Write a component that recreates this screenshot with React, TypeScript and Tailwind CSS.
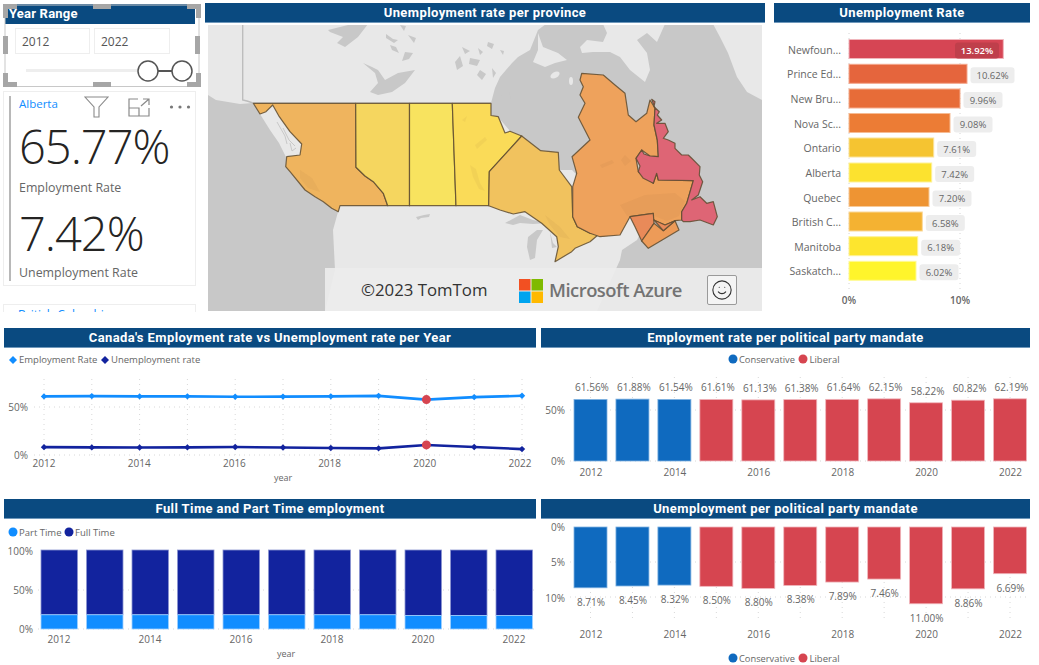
import React from 'react';
import { Smile } from 'lucide-react';

const YEARS = [2012, 2013, 2014, 2015, 2016, 2017, 2018, 2019, 2020, 2021, 2022];
const EMP = [61.56, 61.88, 61.54, 61.61, 61.13, 61.38, 61.64, 62.15, 58.22, 60.82, 62.19];
const UNEMP = [8.71, 8.45, 8.32, 8.5, 8.8, 8.38, 7.89, 7.46, 11.0, 8.86, 6.69];
const PART = [18, 18, 18, 18, 18, 18, 18, 18, 17, 17, 17];

const PROVINCES = [
    { name: 'Newfoun...', value: '13.92%', top: 39.5, w: 154.3, color: '#d64554', border: '#f0b6bc' },
    { name: 'Prince Ed...', value: '10.62%', top: 64.3, w: 118, color: '#e5653d', border: '#f3a78d' },
    { name: 'New Bru...', value: '9.96%', top: 89, w: 111, color: '#e76c38', border: '#f4ab8c' },
    { name: 'Nova Sc...', value: '9.08%', top: 113.5, w: 101, color: '#ec7c35', border: '#f6bb93' },
    { name: 'Ontario', value: '7.61%', top: 138, w: 84.7, color: '#f5c431', border: '#fae298' },
    { name: 'Alberta', value: '7.42%', top: 163, w: 82.7, color: '#fce22f', border: '#fef197' },
    { name: 'Quebec', value: '7.20%', top: 187.5, w: 80, color: '#ee9433', border: '#f7ca99' },
    { name: 'British C...', value: '6.58%', top: 212, w: 73.3, color: '#f4b232', border: '#fad898' },
    { name: 'Manitoba', value: '6.18%', top: 236.7, w: 68.7, color: '#fde52e', border: '#fef297' },
    { name: 'Saskatch...', value: '6.02%', top: 261.3, w: 67, color: '#fff52b', border: '#fffa95' },
];

const BLUE = '#0f6abf';
const RED = '#d64550';

// Newfoundland coast, traced at 3x from x=500 y=60
const NL_COAST = [
    [455, 118], [465, 125], [462, 140], [478, 155], [472, 165], [485, 180], [470, 190], [495, 190], [505, 215],
    [490, 235], [505, 240], [525, 250], [525, 265], [545, 285], [565, 285], [575, 295], [600, 320], [598, 345],
    [608, 365], [595, 405], [575, 420], [600, 410], [620, 430], [640, 425], [652, 470], [640, 495], [600, 480],
    [570, 485], [550, 485], [545, 480], [545, 455], [560, 430], [580, 362], [475, 360], [470, 340], [460, 370],
    [430, 355], [415, 335], [420, 318], [408, 295], [425, 270], [432, 282], [450, 288], [475, 290], [472, 240],
    [462, 195], [465, 145],
];
const NL_PATH = 'M' + NL_COAST.map(([x, y]) => `${(500 + x / 3).toFixed(1)} ${(60 + y / 3).toFixed(1)}`).join('L') + 'Z';

function Title({ children }: { children: React.ReactNode }) {
    return (
        <div className="h-[20px] bg-[#0a4a80] border-b border-[#6f98bb] text-white text-[13px] leading-[19px] font-bold text-center tracking-[0.4px] font-['Roboto',sans-serif]">
            {children}
        </div>
    );
}

function YearRange() {
    return (
        <div className="relative h-[83px] ml-[5px] w-[195px]">
            <div className="h-[20px] w-[190px] mt-[1px] bg-[#0a4a80] text-white text-[13px] leading-[19px] font-bold pl-[4px] tracking-[0.2px] font-['Roboto',sans-serif]">
                Year Range
            </div>
            <div className="flex gap-[4px] ml-[10px] mt-[4px]">
                <div className="w-[75px] h-[26px] border border-[#eeeeee] text-[12px] leading-[25px] text-[#555555] pl-[6px]">2012</div>
                <div className="w-[76px] h-[26px] border border-[#eeeeee] text-[12px] leading-[25px] text-[#555555] pl-[6px]">2022</div>
            </div>
            {/* slider + selection frame */}
            <svg className="absolute left-[-5px] top-[-3px]" width="205" height="90" viewBox="0 0 205 90">
                <rect x="26" y="68" width="112" height="3" fill="#eeeeee" />
                <line x1="158" y1="70" x2="172" y2="70" stroke="#555555" strokeWidth="2" />
                <circle cx="148" cy="70" r="10" fill="white" stroke="#555555" strokeWidth="1.5" />
                <circle cx="182" cy="70" r="10" fill="white" stroke="#555555" strokeWidth="1.5" />
                <rect x="5" y="4" width="194" height="81.5" fill="none" stroke="#c8c8c8" />
                <g fill="#a6a6a6">
                    <path d="M3 3h14v5H8v9H3z" />
                    <path d="M201 3h-14v5h9v9h5z" />
                    <path d="M3 86H17v-5H8v-9H3z" />
                    <path d="M201 86h-14v-5h9v-9h5z" />
                    <rect x="93" y="3" width="18" height="5" />
                    <rect x="93" y="81" width="18" height="5" />
                    <rect x="3" y="35" width="5" height="18" />
                    <rect x="195" y="35" width="5" height="18" />
                </g>
            </svg>
        </div>
    );
}

function KpiCard() {
    return (
        <div className="relative ml-[3px] mt-[4px] w-[193px] h-[195px] border border-[#eeeeee] py-[4px] pl-[5px]">
            <div className="h-full border-l-2 border-[#b8b8b8] pl-[8px]">
                <div className="text-[11.5px] leading-[16px] text-[#118dff]">Alberta</div>
                <div className="mt-[4px] text-[47px] leading-[60px] font-light text-[#252423] tracking-[-1px]">65.77%</div>
                <div className="mt-[4px] text-[12.4px] leading-[16px] text-[#666666]">Employment Rate</div>
                <div className="mt-[7px] text-[47px] leading-[60px] font-light text-[#252423] tracking-[-1px]">7.42%</div>
                <div className="mt-[2px] text-[12.4px] leading-[16px] text-[#666666]">Unemployment Rate</div>
            </div>
            {/* visual header on hover */}
            <div className="absolute right-[4px] top-[4px] flex items-center gap-[19px] text-[#8a8a8a]">
                <svg width="25" height="22" viewBox="0 0 25 22" fill="none" stroke="currentColor" strokeWidth="1.1">
                    <path d="M1 1H24L15 11V21H10V11Z" />
                </svg>
                <svg width="22" height="19" viewBox="0 0 22 19" fill="none" stroke="currentColor" strokeWidth="1.2">
                    <path d="M10 1H1v17h20v-8" />
                    <path d="M1 10h10v8" />
                    <path d="M13 8l8-7M15 1h6v6" />
                </svg>
                <svg width="22" height="6" viewBox="0 0 22 6" fill="#777777">
                    <circle cx="2.5" cy="3" r="1.6" />
                    <circle cx="11" cy="3" r="1.6" />
                    <circle cx="19.5" cy="3" r="1.6" />
                </svg>
            </div>
        </div>
    );
}

function CanadaMap() {
    return (
        <div className="relative ml-[3px] mt-[2px] w-[554px] h-[286px] overflow-hidden bg-[#e8e8e8]">
            <svg width="554" height="286" viewBox="208 25 554 286" className="block">
                {/* water */}
                <g fill="#c8c8c8">
                    <path d="M208 95L216 100L240 104L253 103L260 114L270 130L279 143L286 157L286 167L290 172L305 190L315 197L323 202L332 208L338 212L333 230L335 270L325 311H208Z" />
                    <path d="M491 103L491 103L495 88L500 77L512 63L518 57L530 50L538 30L546 24H713L720 37L728 53L737 77L747 92L762 100V311H597L620 260L622 250L637 240L650 215L600 200L572 170L559 170L558 152L540 150L522 136L510 131L498 117L491 115Z" />
                    <path d="M328 30L352 24H368L358 37L345 47L337 43L343 37L330 32Z" />
                    <path d="M363 63L372 67L378 70L385 80L398 73L415 70L405 83L392 92L378 95L370 92L378 83L375 73Z" />
                    <path d="M390 45l6 2 3 6-7-3zM386 34l7 5 5 1-4 3-8-5zM405 52l8 1-4 6-7 2zM455 62l5-6 3 10-6 4zM462 47l8 4-5 3zM470 58l10 2-3 6-8-2zM480 70l6 4-4 6-5-5zM488 42l6 2-2 5-5-3zM408 35l6 8 2-5zM400 25l4 6 2-5z" />
                    <path d="M505 105l-5-12 3-4 6 3 2 7zM492 68l4 5-3 5zM478 48l5 4-3 3zM500 50l4 1-1 4z" />
                    {/* great lakes */}
                    <path d="M505 223L520 215L533 220L547 223L533 224L520 223L513 225Z" />
                    <path d="M528 237L537 230L543 230L537 240L535 258L530 260L527 247Z" />
                    <path d="M550 232L553 243L557 247L552 248Z" />
                    <path d="M416 217l8-2 6-1-1 3-8 1-3 2z" />
                </g>
                {/* islands on the bay */}
                <g fill="#e8e8e8">
                    <path d="M538 33L543 47L558 53L567 60L555 63L545 67L533 62L538 50Z" />
                    <path d="M603 24H665L657 42L647 33L637 40L647 53L650 70L645 82L630 70L620 57L610 52L593 52L582 53L580 47L587 40L603 42L607 33Z" />
                    <ellipse cx="555" cy="75" rx="5" ry="3" transform="rotate(-30 555 75)" />
                    <ellipse cx="571" cy="81" rx="2" ry="4" />
                </g>
                <path d="M242.7 24V100L247 101L253 103H491" fill="none" stroke="#bdbdbd" strokeWidth="1.4" />
                {/* fjords along the panhandle */}
                <path d="M277 122l8 14 2 8M283 128l6 12 6 6M290 143l2 8 4-3" fill="none" stroke="#c4c4c4" strokeWidth="0.9" />

                {/* provinces */}
                <g stroke="#5f4c30" strokeOpacity="0.85" strokeWidth="1.2" strokeLinejoin="round">
                    <path fill="#efb45e" d="M253.3 103.3L260 114L266 111.7L272.7 105L279.3 116.7L290 131.7L301.7 144L300 155L286.7 156.7L285.7 166.7L290 171.7L305 190L315 196.7L323.3 201.7L331.7 208.3L338.3 211.7L340 205.7H387.7L383.3 193.3L373.3 181.7L365 176L356 167.3L355.7 103.3Z" />
                    <path fill="#f5d65f" d="M355.7 103.3L356 167.3L365 176L373.3 181.7L383.3 193.3L387.7 205.7H409.5V103.3Z" />
                    <path fill="#f8e35f" d="M409.5 103.3V205.7H456L452.3 103.3Z" />
                    <path fill="#fadb58" d="M452.3 103.3L456 205.7H488.7L489.3 171.7L521.7 136L510 131.3L505 133L498.3 116.7L491 115.5V103.3Z" />
                    <path fill="#f1c25e" d="M521.7 136L540.7 150.7L558.3 152.3L559.3 170L571.7 186.7L572.7 216.7L577.3 226.7L590 233.3L600 233.3L590 241.7L575 248.3L571.7 251.7L555 261.7L558.3 246.7L556.7 236.7L541.7 223.3L525 211.7L513.3 214L500 210L488.7 205.7L489.3 171.7Z" />
                    <path fill="#eea25c" d="M581.7 73.3L603.3 75L615 85L625 93.3L628.3 115L636 121.7L646.7 113.3L650 100L655 108.3L654 125L657.3 140L658.3 156.7L650 156L641.7 150L636 158.3L638.3 171.7L653.3 183.3L656.7 173.3L658.3 180L693.3 180.7L686.7 203.3L681.7 211.7L681.7 220L675 220.7L665 225L653.3 220L653.3 213.3L630 216.7L620 235L600 236.7L590 233.3L577.3 226.7L572.7 216.7V186.7L576.7 173.3L572 156.7L590 140L578.3 117.3L585 103.3L580 95L583.3 86.7L580 80Z" />
                    <path fill="#de6575" d={NL_PATH} />
                    <path fill="#e98a59" d="M630 216.7L653.3 213.3L654 223.3L641.7 241L635 226.7Z" />
                    <path fill="#ed9b58" d="M641.7 241L654 223.3L663.3 230.7L675 220.7L679 230L648.3 248.3Z" />
                    <path fill="#e98a59" d="M654 220L665 225L675 220.7L663.3 230.7Z" />
                </g>
                {/* lakes showing through */}
                <g fill="#8a6a3a" fillOpacity="0.07">
                    <path d="M470 165l6 4 4 14 5 8-6-2-6-12zM475 145l10-8 2 3-10 9zM462 120l5-4-2 6z" />
                    <path d="M620 205l25-10 30-2 10 8-6 15-12 5-20-8-20 3z" />
                    <path d="M300 170l12 8 8 14-12-4-8-10z" />
                    <path d="M600 165l12-5 2 3-12 5zM625 155l6 6-6 5-4-6z" />
                    <path d="M545 215l15 12 10 12-10-2-10-12z" />
                </g>
            </svg>
            {/* attribution */}
            <div className="absolute left-[117px] bottom-0 w-[437px] h-[43px] bg-[#ececec]/90 flex items-center">
                <span className="ml-[36px] w-[158px] text-[16.8px] text-[#333333]">©2023 TomTom</span>
                <svg width="24" height="24" viewBox="0 0 24 24" className="mt-[2px]">
                    <rect width="11.5" height="11.5" fill="#f25022" />
                    <rect x="12.5" width="11.5" height="11.5" fill="#7fba00" />
                    <rect y="12.5" width="11.5" height="11.5" fill="#00a4ef" />
                    <rect x="12.5" y="12.5" width="11.5" height="11.5" fill="#ffb900" />
                </svg>
                <span className="ml-[6px] w-[134px] whitespace-nowrap text-[18.4px] font-semibold tracking-[-0.5px] text-[#737373]">Microsoft Azure</span>
                <div className="ml-[24px] w-[30px] h-[30px] border border-[#9a9a9a] rounded-[2px] bg-[#f4f4f4] flex items-center justify-center text-[#333333]">
                    <Smile size={22} strokeWidth={1.2} />
                </div>
            </div>
        </div>
    );
}

function ProvinceBars() {
    return (
        <svg width="256" height="300" viewBox="774 23 256 300" className="block">
            {[849, 960].map((x) => (
                <line key={x} x1={x} y1="33" x2={x} y2="290" stroke="#d4d4d4" strokeDasharray="1 4" />
            ))}
            {PROVINCES.map((p, i) => {
                const inside = i === 0;
                const pillW = p.value.length === 6 ? 44 : 39;
                const pillX = inside ? 955 : 849 + p.w + 3.5;
                return (
                    <g key={p.name}>
                        <text x="841" y={p.top + 14} textAnchor="end" fontSize="10.5" fill="#666666">{p.name}</text>
                        <rect x="849" y={p.top} width={p.w} height="19" fill={p.color} stroke={p.border} strokeWidth="1" />
                        <rect x={pillX} y={p.top + 3} width={pillW} height="16" rx="3" fill={inside ? '#bf3f4b' : '#ededed'} />
                        <text x={pillX + pillW / 2} y={p.top + 14.5} textAnchor="middle" fontSize="9.5" fontWeight={inside ? 600 : 400} fill={inside ? '#ffffff' : '#666666'}>{p.value}</text>
                    </g>
                );
            })}
            <text x="849" y="304" textAnchor="middle" fontSize="10" fontWeight="600" fill="#666666">0%</text>
            <text x="960" y="304" textAnchor="middle" fontSize="10" fontWeight="600" fill="#666666">10%</text>
        </svg>
    );
}

function diamond(cx: number, cy: number, r: number) {
    return `${cx},${cy - r} ${cx + r},${cy} ${cx},${cy + r} ${cx - r},${cy}`;
}

function LineChart() {
    const xs = YEARS.map((_, i) => 44 + i * 47.8);
    const yOf = (v: number) => 456.5 - v * 0.96;
    const series = [
        { data: EMP, color: '#118dff' },
        { data: UNEMP, color: '#12239e' },
    ];
    return (
        <svg width="532" height="150" viewBox="4 349 532 150" className="block">
            <polygon points={diamond(13, 361, 4)} fill="#118dff" />
            <text x="19" y="364" fontSize="9.5" fill="#666666">Employment Rate</text>
            <polygon points={diamond(105, 361, 4)} fill="#12239e" />
            <text x="111" y="364" fontSize="9.5" fill="#666666">Unemployment rate</text>
            {xs.map((x) => (
                <line key={x} x1={x} y1="380" x2={x} y2="458" stroke="#d8d8d8" strokeDasharray="1 4" />
            ))}
            {[408, 456].map((y) => (
                <line key={y} x1="34" y1={y} x2="526" y2={y} stroke="#d8d8d8" strokeDasharray="1 4" />
            ))}
            <text x="28" y="412" textAnchor="end" fontSize="10" fill="#666666">50%</text>
            <text x="28" y="460" textAnchor="end" fontSize="10" fill="#666666">0%</text>
            {series.map((s) => (
                <g key={s.color}>
                    <polyline points={s.data.map((v, i) => `${xs[i]},${yOf(v)}`).join(' ')} fill="none" stroke={s.color} strokeWidth="2.6" />
                    {s.data.map((v, i) =>
                        i === 8 ? (
                            <circle key={i} cx={xs[i]} cy={yOf(v)} r="4.5" fill={RED} />
                        ) : (
                            <polygon key={i} points={diamond(xs[i], yOf(v), 3.2)} fill={s.color} />
                        )
                    )}
                </g>
            ))}
            {YEARS.filter((y) => y % 2 === 0).map((y, i) => (
                <text key={y} x={44 + i * 95.2} y="468" textAnchor="middle" fontSize="10" fill="#666666">{y}</text>
            ))}
            <text x="283" y="482" textAnchor="middle" fontSize="9" fill="#666666">year</text>
        </svg>
    );
}

function StackedChart() {
    const top = 550;
    const bottom = 629;
    return (
        <svg width="532" height="146" viewBox="4 519 532 146" className="block">
            <circle cx="13" cy="532" r="4.5" fill="#118dff" />
            <text x="19" y="535.5" fontSize="9.5" fill="#666666">Part Time</text>
            <circle cx="69" cy="532" r="4.5" fill="#12239e" />
            <text x="75" y="535.5" fontSize="9.5" fill="#666666">Full Time</text>
            <text x="33" y="555" textAnchor="end" fontSize="10" fill="#666666">100%</text>
            <text x="33" y="594" textAnchor="end" fontSize="10" fill="#666666">50%</text>
            <text x="33" y="633" textAnchor="end" fontSize="10" fill="#666666">0%</text>
            {[590, 629].map((y) => (
                <line key={y} x1="38" y1={y} x2="536" y2={y} stroke="#d8d8d8" strokeDasharray="1 4" />
            ))}
            {YEARS.map((y, i) => {
                const x = 41 + i * 45.5;
                const split = bottom - ((bottom - top) * PART[i]) / 100;
                return (
                    <g key={y}>
                        <rect x={x} y={top} width="36.5" height={split - top} fill="#12239e" stroke="#8a94d0" strokeWidth="0.8" />
                        <rect x={x} y={split} width="36.5" height={bottom - split} fill="#118dff" stroke="#a0d0ff" strokeWidth="0.8" />
                        {y % 2 === 0 && (
                            <text x={x + 18} y="643" textAnchor="middle" fontSize="10" fill="#666666">{y}</text>
                        )}
                    </g>
                );
            })}
            <text x="286" y="657" textAnchor="middle" fontSize="9" fill="#666666">year</text>
        </svg>
    );
}

function PartyLegend({ y }: { y: number }) {
    return (
        <g>
            <circle cx="733" cy={y} r="4.5" fill={BLUE} />
            <text x="739" y={y + 3.5} fontSize="9.3" fill="#666666">Conservative</text>
            <circle cx="803" cy={y} r="4.5" fill={RED} />
            <text x="809.5" y={y + 3.5} fontSize="9.5" fill="#666666">Liberal</text>
        </g>
    );
}

function EmploymentParty() {
    return (
        <svg width="489" height="150" viewBox="541 349 489 150" className="block">
            <PartyLegend y={360} />
            {YEARS.map((y, i) => (
                <line key={y} x1={590.5 + i * 41.95} y1="378" x2={590.5 + i * 41.95} y2="462" stroke="#d8d8d8" strokeDasharray="1 4" />
            ))}
            {[411, 462].map((y) => (
                <line key={y} x1="570" y1={y} x2="1030" y2={y} stroke="#d8d8d8" strokeDasharray="1 4" />
            ))}
            <text x="565" y="415" textAnchor="end" fontSize="10" fill="#666666">50%</text>
            <text x="565" y="466" textAnchor="end" fontSize="10" fill="#666666">0%</text>
            {YEARS.map((y, i) => {
                const x = 574 + i * 41.95;
                const barTop = 462 - EMP[i] * 1.0;
                const cons = i < 3;
                return (
                    <g key={y}>
                        <rect x={x} y={barTop} width="33" height={462 - barTop} fill={cons ? BLUE : RED} stroke={cons ? '#7fb2e2' : '#f0b6bc'} strokeWidth="0.8" />
                        <text x={x + 18} y={barTop - 8} textAnchor="middle" fontSize="10" fill="#666666">{EMP[i].toFixed(2)}%</text>
                        {y % 2 === 0 && (
                            <text x={x + 17} y="477" textAnchor="middle" fontSize="10" fill="#666666">{y}</text>
                        )}
                    </g>
                );
            })}
        </svg>
    );
}

function UnemploymentParty() {
    return (
        <svg width="489" height="146" viewBox="541 519 489 146" className="block">
            {YEARS.map((y, i) => (
                <line key={y} x1={590.5 + i * 41.95} y1="527" x2={590.5 + i * 41.95} y2="622" stroke="#d8d8d8" strokeDasharray="1 4" />
            ))}
            {[562, 597].map((y) => (
                <line key={y} x1="570" y1={y} x2="1030" y2={y} stroke="#d8d8d8" strokeDasharray="1 4" />
            ))}
            <text x="565" y="531" textAnchor="end" fontSize="10" fill="#666666">0%</text>
            <text x="565" y="566" textAnchor="end" fontSize="10" fill="#666666">5%</text>
            <text x="565" y="602" textAnchor="end" fontSize="10" fill="#666666">10%</text>
            {YEARS.map((y, i) => {
                const x = 574 + i * 41.95;
                const h = UNEMP[i] * 6.98;
                const cons = i < 3;
                return (
                    <g key={y}>
                        <rect x={x} y="527" width="33" height={h} fill={cons ? BLUE : RED} stroke={cons ? '#7fb2e2' : '#f0b6bc'} strokeWidth="0.8" />
                        <text x={x + 17} y={527 + h + 18} textAnchor="middle" fontSize="10" fill="#666666">{UNEMP[i].toFixed(2)}%</text>
                        {y % 2 === 0 && (
                            <text x={x + 17} y="638" textAnchor="middle" fontSize="10" fill="#666666">{y}</text>
                        )}
                    </g>
                );
            })}
            <PartyLegend y={658} />
        </svg>
    );
}

export default function App() {
    return (
        <div className="w-[1039px] h-[665px] overflow-hidden bg-white pt-[3px] font-['Open_Sans','Noto_Sans',sans-serif]">
            <div className="flex h-[325px]">
                <div className="w-[205px]">
                    <YearRange />
                    <KpiCard />
                    <div className="ml-[3px] mt-[18px] w-[193px] h-[8px] overflow-hidden border-x border-t border-[#eeeeee] pl-[14px] text-[12px] leading-[20px] text-[#118dff]">
                        British Columbia
                    </div>
                </div>
                <div className="w-[560px]">
                    <Title>Unemployment rate per province</Title>
                    <CanadaMap />
                </div>
                <div className="ml-[9px] w-[256px]">
                    <Title>Unemployment Rate</Title>
                    <ProvinceBars />
                </div>
            </div>
            <div className="flex h-[171px]">
                <div className="ml-[4px] w-[532px]">
                    <Title>Canada's Employment rate vs Unemployment rate per Year</Title>
                    <LineChart />
                </div>
                <div className="ml-[5px] w-[489px]">
                    <Title>Employment rate per political party mandate</Title>
                    <EmploymentParty />
                </div>
            </div>
            <div className="flex h-[166px]">
                <div className="ml-[4px] w-[532px]">
                    <Title>Full Time and Part Time employment</Title>
                    <StackedChart />
                </div>
                <div className="ml-[5px] w-[489px]">
                    <Title>Unemployment per political party mandate</Title>
                    <UnemploymentParty />
                </div>
            </div>
        </div>
    );
}
